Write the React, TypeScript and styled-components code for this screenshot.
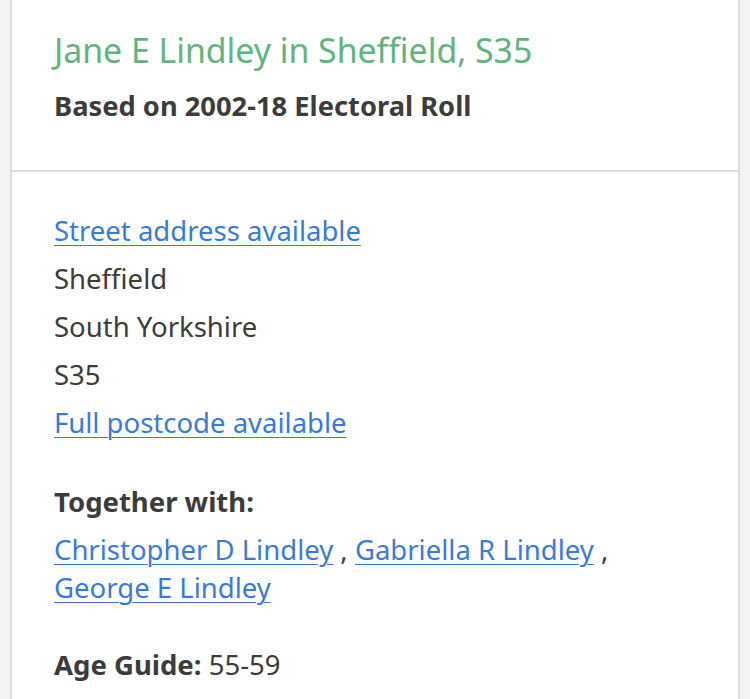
import React from "react";
import styled, { createGlobalStyle } from "styled-components";

const GlobalStyle = createGlobalStyle`
  html, body {
    margin: 0;
    padding: 0;
    background: #f3f3f1;
  }
  body {
    font-family: "Noto Sans", "Open Sans", sans-serif;
    color: #3c3c3c;
  }
`;

const Page = styled.div`
  padding-left: 10px;
  width: 730px;
  min-height: 699px;
`;

const Card = styled.div`
  background: #ffffff;
  border-left: 2px solid #dcdcdc;
  border-right: 2px solid #dcdcdc;
  min-height: 699px;
`;

const Header = styled.header`
  padding: 28px 42px 0;
  height: 142px;
  border-bottom: 2px solid #dcdcdc;
`;

const Title = styled.h1`
  margin: 0;
  font-size: 33.8px;
  font-weight: 400;
  line-height: 44px;
  color: #62b47f;
`;

const Subtitle = styled.p`
  margin: 14px 0 0;
  font-size: 27.3px;
  font-weight: 700;
  line-height: 40px;
  color: #3c3c3c;
`;

const Body = styled.section`
  padding: 35px 42px 0;
  font-size: 27.5px;
`;

const Address = styled.div`
  line-height: 48px;
`;

const Line = styled.div``;

const Link = styled.a`
  color: #3a7bd5;
  text-decoration: underline;
  text-underline-offset: 4px;
  text-decoration-thickness: 1px;
`;

const Label = styled.div<{ $gap: number }>`
  margin-top: ${(p) => p.$gap}px;
  line-height: 38px;
  font-weight: 700;
`;

const Value = styled.span`
  font-weight: 400;
`;

const People = styled.div`
  margin-top: 10px;
  line-height: 38px;
`;

export default function App() {
  const together = ["Christopher D Lindley", "Gabriella R Lindley", "George E Lindley"];
  return (
    <>
      <GlobalStyle />
      <Page>
        <Card>
          <Header>
            <Title>Jane E Lindley in Sheffield, S35</Title>
            <Subtitle>Based on 2002-18 Electoral Roll</Subtitle>
          </Header>
          <Body>
            <Address>
              <Line>
                <Link href="#">Street address available</Link>
              </Line>
              <Line>Sheffield</Line>
              <Line>South Yorkshire</Line>
              <Line>S35</Line>
              <Line>
                <Link href="#">Full postcode available</Link>
              </Line>
            </Address>
            <Label $gap={36}>Together with:</Label>
            <People>
              {together.map((name, i) => (
                <React.Fragment key={name}>
                  <Link href="#">{name}</Link>
                  {i < together.length - 1 ? " , " : ""}
                </React.Fragment>
              ))}
            </People>
            <Label $gap={39}>
              Age Guide: <Value>55-59</Value>
            </Label>
          </Body>
        </Card>
      </Page>
    </>
  );
}
